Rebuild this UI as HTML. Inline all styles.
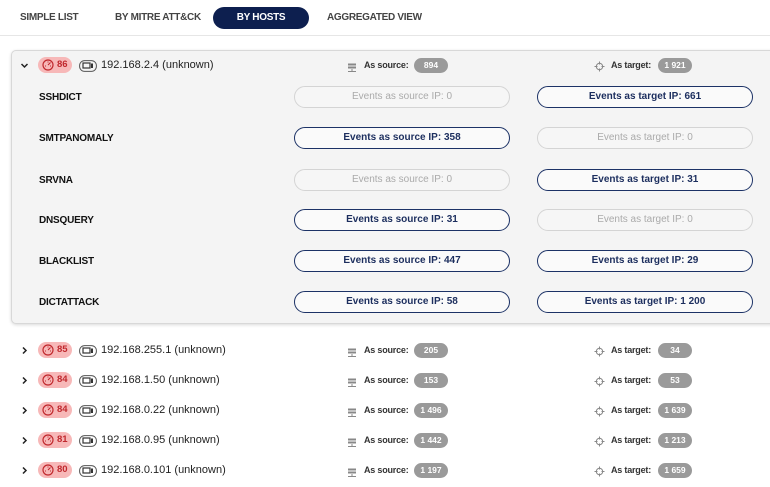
<!DOCTYPE html>
<html><head><meta charset="utf-8"><style>
*{margin:0;padding:0;box-sizing:border-box}
body{width:770px;height:487px;overflow:hidden;background:#fff;font-family:"Liberation Sans",sans-serif;position:relative;color:#222}
.a{position:absolute}
.tab{position:absolute;top:7px;height:22px;line-height:22px;font-size:10px;font-weight:bold;color:#444;letter-spacing:-0.3px}
.sep{position:absolute;left:0;top:35px;width:770px;height:1px;background:#e6e6e6}
.panel{position:absolute;left:11px;top:50px;width:780px;height:274px;background:#f4f4f4;border:1px solid #d8d8d8;border-radius:5px;box-shadow:0 1px 3px rgba(0,0,0,.15)}
.chev{position:absolute;font-size:10px;color:#222;width:10px}
.score{position:absolute;height:16px;width:34px;border-radius:8px;background:#f7b8b8;color:#c0282d;font-size:9.5px;font-weight:bold;line-height:16px;padding-left:19px}
.score svg{position:absolute;left:4px;top:2px}
.dev{position:absolute}
.ip{position:absolute;font-size:11px;color:#222}
.lbl{position:absolute;font-size:9px;font-weight:bold;color:#333;letter-spacing:-0.2px}
.pill{position:absolute;height:15px;width:34px;border-radius:8px;background:#9a9a9a;color:#fff;font-size:8.5px;font-weight:bold;text-align:center;line-height:15px}
.name{position:absolute;left:39px;font-size:10px;font-weight:bold;color:#111;letter-spacing:-0.2px}
.btn{position:absolute;width:216px;height:22px;border-radius:11px;border:1.5px solid #1c3266;color:#1c2e5e;font-size:10px;font-weight:bold;text-align:center;line-height:20px;background:#fafafa}
.btn.off{border-color:#d4d4d4;color:#aaa;font-weight:normal;background:#f6f6f6}
</style></head><body>
<div class="tab" style="left:20px">SIMPLE LIST</div>
<div class="tab" style="left:115px">BY MITRE ATT&amp;CK</div>
<div class="tab" style="left:213px;width:96px;background:#0d1f4f;color:#fff;border-radius:11px;text-align:center">BY HOSTS</div>
<div class="tab" style="left:327px">AGGREGATED VIEW</div>
<div class="sep"></div>
<div class="panel"></div>
<div id="c"></div>
<script>
var icoS='<svg width="10" height="10" viewBox="0 0 10 10"><g fill="#888"><rect x="1" y="0.5" width="8" height="2"/><rect x="1" y="3.5" width="8" height="2"/><rect x="4.5" y="6" width="1" height="2"/><rect x="1" y="8" width="8" height="1"/></g></svg>';
var icoT='<svg width="11" height="11" viewBox="0 0 11 11"><circle cx="5.5" cy="5.5" r="3.2" fill="none" stroke="#888" stroke-width="1"/><path d="M5.5 0.5v3M5.5 7.5v3M0.5 5.5h3M7.5 5.5h3" stroke="#888" stroke-width="1"/></svg>';
var gauge='<svg width="12" height="12" viewBox="0 0 12 12"><circle cx="6" cy="6" r="5" fill="none" stroke="#c0282d" stroke-width="1.2"/><path d="M6 6L8.5 3.5M3 7h1M8 7h1M6 2.5v1" stroke="#c0282d" stroke-width="1.1"/></svg>';
var dev='<svg width="18" height="12" viewBox="0 0 18 12"><rect x="0.6" y="0.6" width="16.8" height="10.8" rx="5" fill="none" stroke="#555" stroke-width="1"/><rect x="4" y="3" width="7" height="5" fill="none" stroke="#333" stroke-width="1.2"/><rect x="12" y="3.5" width="2" height="4.5" fill="#333"/></svg>';
function hdr(y,exp,sc,ip,s,t){
 var h='';
 h+='<div class="chev a" style="left:20px;top:'+(y-4)+'px">'+(exp?'<svg width="9" height="9" viewBox="0 0 9 9"><path d="M1.5 3l3 3 3-3" fill="none" stroke="#222" stroke-width="1.5"/></svg>':'<svg width="9" height="9" viewBox="0 0 9 9"><path d="M3 1.5l3 3-3 3" fill="none" stroke="#222" stroke-width="1.5"/></svg>')+'</div>';
 h+='<div class="score" style="left:38px;top:'+(y-8)+'px">'+gauge+sc+'</div>';
 h+='<div class="dev" style="left:79px;top:'+(y-6)+'px">'+dev+'</div>';
 h+='<div class="ip" style="left:101px;top:'+(y-6)+'px">'+ip+'</div>';
 h+='<div class="a" style="left:347px;top:'+(y-5)+'px">'+icoS+'</div>';
 h+='<div class="lbl" style="left:364px;top:'+(y-5)+'px">As source:</div>';
 h+='<div class="pill" style="left:414px;top:'+(y-7)+'px">'+s+'</div>';
 h+='<div class="a" style="left:594px;top:'+(y-6)+'px">'+icoT+'</div>';
 h+='<div class="lbl" style="left:611px;top:'+(y-5)+'px">As target:</div>';
 h+='<div class="pill" style="left:658px;top:'+(y-7)+'px">'+t+'</div>';
 return h;
}
var H=hdr(65,1,86,'192.168.2.4 (unknown)','894','1 921');
var ev=[['SSHDICT',0,661],['SMTPANOMALY',358,0],['SRVNA',0,31],['DNSQUERY',31,0],['BLACKLIST',447,29],['DICTATTACK',58,'1 200']];
var ys=[97,138,180,220,261,302];
ev.forEach(function(e,i){var y=ys[i];
 H+='<div class="name" style="top:'+(y-5)+'px">'+e[0]+'</div>';
 H+='<div class="btn'+(e[1]===0?' off':'')+'" style="left:294px;top:'+(y-11)+'px">Events as source IP: '+e[1]+'</div>';
 H+='<div class="btn'+(e[2]===0?' off':'')+'" style="left:537px;top:'+(y-11)+'px">Events as target IP: '+e[2]+'</div>';
});
var rows=[[350,85,'192.168.255.1','205','34'],[380,84,'192.168.1.50','153','53'],[410,84,'192.168.0.22','1 496','1 639'],[440,81,'192.168.0.95','1 442','1 213'],[470,80,'192.168.0.101','1 197','1 659']];
rows.forEach(function(r){H+=hdr(r[0],0,r[1],r[2]+' (unknown)',r[3],r[4]);});
document.getElementById('c').innerHTML=H;
</script>
</body></html>
